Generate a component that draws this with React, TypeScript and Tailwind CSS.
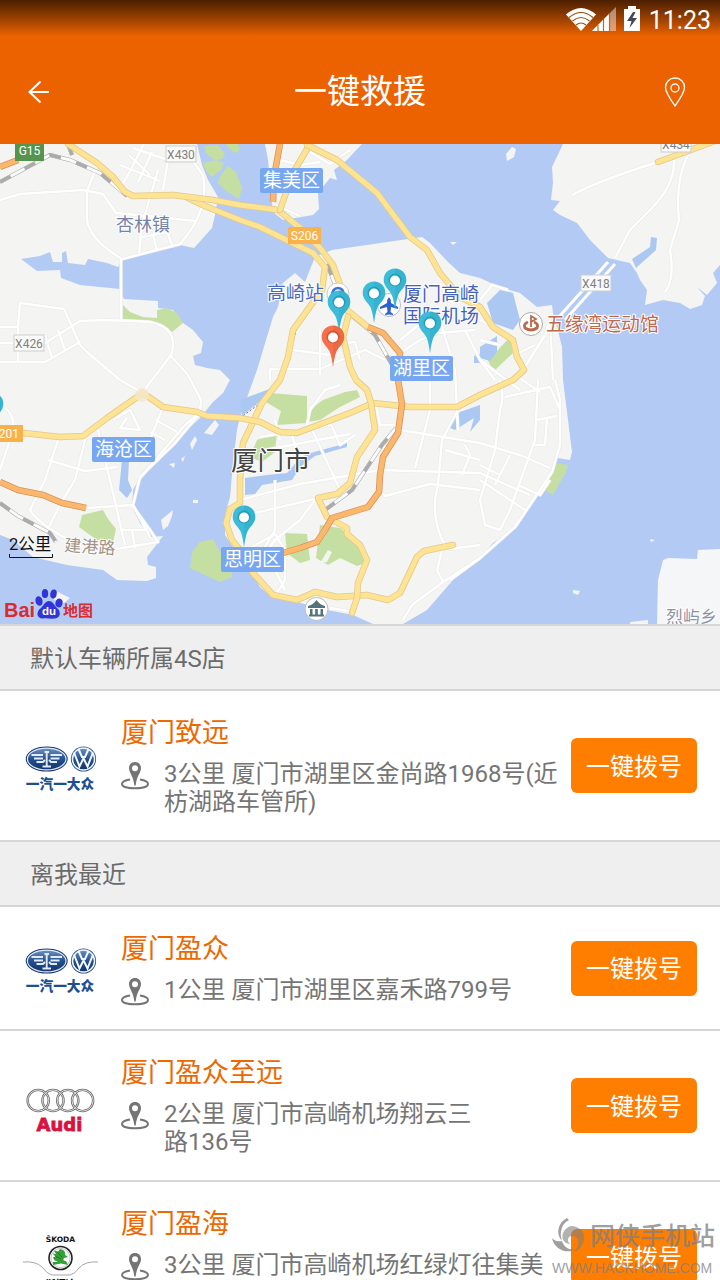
import React from 'react';

const CJK = 'Roboto, "Noto Sans CJK SC", sans-serif';

type RoadProps = { d: string };

function YellowRoad({ d }: RoadProps) {
  return (
    <g fill="none" strokeLinejoin="round" strokeLinecap="round">
      <path d={d} stroke="#e2c88a" strokeWidth="6.5" />
      <path d={d} stroke="#fde392" strokeWidth="5" />
    </g>
  );
}

function OrangeRoad({ d }: RoadProps) {
  return (
    <g fill="none" strokeLinejoin="round">
      <path d={d} stroke="#d9905a" strokeWidth="6.5" />
      <path d={d} stroke="#fbb86d" strokeWidth="5" />
    </g>
  );
}

function Railway({ d }: RoadProps) {
  return (
    <g fill="none">
      <path d={d} stroke="#a5a5a5" strokeWidth="4" />
      <path d={d} stroke="#fbfbfb" strokeWidth="3" />
      <path d={d} stroke="#ababab" strokeWidth="3.5" strokeDasharray="12 16" />
    </g>
  );
}

function MapPin({ x, y, color = '#3cbcd8', edge = '#1f94af' }: { x: number; y: number; color?: string; edge?: string }) {
  return (
    <g transform={`translate(${x} ${y})`}>
      <path
        d="M0 -11.5C-6.6 -11.5 -11.3 -6.5 -11.3 -.3C-11.3 6.5 -6 9.5 -3.6 14C-1.8 18 -1 23 0 30C1 23 1.8 18 3.6 14C6 9.5 11.3 6.5 11.3 -.3C11.3 -6.5 6.6 -11.5 0 -11.5Z"
        fill={color}
      />
      <path d="M0 -11.5C6.6 -11.5 11.3 -6.5 11.3 -.3C11.3 6.5 6 9.5 3.6 14C1.8 18 1 23 0 30Z" fill={edge} opacity=".2" />
      <circle r="6.5" fill={edge} opacity=".75" />
      <circle cy=".5" r="5" fill="#fff" />
    </g>
  );
}

function District({ x, y, w = 63, name }: { x: number; y: number; w?: number; name: string }) {
  return (
    <g>
      <rect x={x} y={y} width={w} height="25" rx="2" fill="#78a7f2" />
      <text x={x + w / 2} y={y + 19} textAnchor="middle" fontSize="19" fill="#fff">{name}</text>
    </g>
  );
}

function RoadSign({ x, y, name }: { x: number; y: number; name: string }) {
  return (
    <g>
      <rect x={x} y={y} width="30" height="16" fill="#fafafa" stroke="#cdcdcd" />
      <text x={x + 15} y={y + 12.5} textAnchor="middle" fontSize="12" fill="#808080">{name}</text>
    </g>
  );
}

const GREENS = [
  'M123 305L130 312L143 317L157 318L157 310L167 308L177 313L183 323L172 332L160 323L123 319Z',
  'M270 393L307 396V423L277 425L281 411L266 402Z',
  'M323 400L345 392L357 390L360 397L340 407L320 420L308 422L311 409Z',
  'M257 440L277 432L275 452L262 462L250 457Z',
  'M320 525L340 528L363 547L366 563L357 566L340 558L328 565L316 558Z',
  'M285 533L307 534L310 560L300 563L287 553Z',
  'M82 515L103 510L108 519L116 529L113 542L97 540L79 527Z',
  'M200 542L213 539L219 550L230 560L232 577L220 582L190 568L192 552Z',
  'M557 463L568 465L566 472L553 495L542 488Z',
  'M510 337L513 353L493 372L488 360L498 350Z',
  'M265 479L278 474L287 478L275 484Z',
];

const WATERS = [
  'M487 303L500 290L513 293L520 320L513 330L493 323Z',
  'M480 347L497 336V352L490 361L480 358Z',
  'M245 478L267 475L287 473L300 458L307 454L347 443V447L315 456L300 467L292 480L262 485L255 494L245 495Z',
  'M448 427L460 412L480 405V420L470 432L474 418L455 430Z',
  'M122 460H129L128 480L132 490L127 498L119 490Z',
  'M632 259L650 247L651 237L657 238L656 250L636 268Z',
  'M474 356L480 354V363H474Z',
  'M240 400L275 387L262 400L242 416Z',
];

const MINOR = [
  'M0 200L20 194L83 190L103 194L116 213L196 221',
  'M144 144L128 175L121 186M133 148L168 160L163 190M120 165L160 181M129 155L150 175M152 152L138 182',
  'M87 212V191L97 166M87 190V220Q90 240 122 259L180 244Q210 210 203 175L192 160',
  'M158 170L142 225L139 253M153 235L157 250M167 232L173 247M139 238L167 232',
  'M121 258V319M0 327H18L20 303L64 309L80 345L88 353L120 380M0 343H45L80 321Q110 319 150 322Q180 328 171 355Q160 370 148 385L143 393',
  'M0 362L45 362L80 342M45 335L52 358M58 330L65 350M170 355L188 375L200 398Q205 410 185 425L140 478',
  'M143 393L120 380M18 327V362',
  'M0 405Q20 415 10 440L0 470M58 440L45 480L30 510Q35 520 60 535L75 543',
  'M86 436L75 480Q50 520 45 538M48 460L85 471L117 467M98 430L110 480L125 545M113 420L130 410L140 430L120 428L127 418M163 407L150 440M156 420L177 432M150 432L165 440M110 550L158 542L150 530L132 505L87 508',
  'M200 413L175 443L140 477L133 505L150 537M120 530L145 530M132 530L135 548',
  'M310 152L330 164L350 150M280 160L300 165L320 162M276 205L300 216M290 180L305 175',
  'M270 380V369L320 369L365 350L385 360M293 350L330 355V335M320 330V375M330 345L355 342L360 360',
  'M400 353L420 340L438 333L475 330M440 320L455 370L458 430M420 324L400 340',
  'M465 330L480 360L520 390M480 340L500 345M515 375L540 392',
  'M240 500L300 484L380 470L480 473L530 495M242 516L310 500L335 495M275 480V530L260 555L275 570L285 590M260 437L330 425M265 450L350 434M290 430L297 450M310 425L340 490M275 420L280 440M330 422L340 445L355 435',
  'M260 560L275 540L300 520L315 500M250 548L275 534L285 550V580L275 596M330 608L354 612',
  'M307 425L310 410L325 390L340 385M395 425L400 430L480 443L520 455L550 468M375 400L380 425L395 425M386 434L381 470',
  'M430 380V410L415 468M458 410L442 440L438 485Q430 510 442 540L450 549L480 545M465 445L470 455L462 475M378 490L385 496L430 484L480 490M445 450L480 460',
  'M443 582L480 558L515 527L552 472L560 445V400L555 380M443 582L437 570L442 550M403 620L412 605L443 582',
  'M500 380Q505 395 500 410L495 450L480 500L485 525L500 530L510 510L535 440L538 380M505 397L550 387L560 410M536 420L557 416M547 418L545 445H535M480 465L500 475M510 455L495 485M480 480L525 510M518 485L540 495L550 480',
  'M480 300L492 285L508 290M480 320L500 330M480 360L495 380M523 370L545 335L550 320L553 380M514 355L535 345',
  'M572 195Q600 180 658 162M674 160Q675 185 650 210L630 230L615 258M688 155Q675 180 679 220L670 250Q675 280 665 292',
  'M480 558L450 580',
];

function CityMap() {
  return (
    <svg
      viewBox="0 144 720 480"
      preserveAspectRatio="xMidYMid slice"
      className="block h-[480px] w-full shrink-0"
      fontFamily={CJK}
      role="img"
      aria-label="厦门市地图"
    >
      <rect y="144" width="720" height="480" fill="#b3cbf4" />
      <g fill="#f4f4f3">
        <path d="M0 144H197L202 165L208 180L218 197L215 215L212 228L194 248L180 245L123 258L118 267L107 263L88 259L85 265L68 263L66 251L62 253V262L53 262L50 252L40 256L21 259L37 271L60 270L61 278L80 285L120 289L124 299L158 301V308L173 310L183 323L193 330L203 342L201 353L193 356L195 365L207 368L220 370L230 380L223 393L213 402L200 418L173 443L140 477L133 490L132 507L140 523L150 537L163 536L147 557L148 565L156 567V578L147 581L117 580L103 570L67 565L33 557L13 540L0 535Z" />
        <path d="M265 144L268 160L272 203L273 212L283 220L313 215L319 209L318 193L330 178L337 180L334 170L347 160L362 144Z" />
        <path d="M332 250L422 237L430 243L448 262L460 273L480 278L500 287L520 293L537 307L552 305L553 313L557 327L562 347L563 380L572 452L570 460L557 458L552 480L542 490L517 527L493 543L480 558L453 580L427 610L403 624H373L353 615L327 610L297 602L273 598L260 587L252 572L235 550L225 535V515L230 497L233 463L237 430L240 417L257 370L273 317L278 307L283 283L295 273L305 282L315 257Z" />
        <path d="M563 144L552 167L553 183L551 200L560 201L553 210L560 215L577 223L590 240L608 258L630 263L637 273L640 280L647 290L645 305L663 300L680 303L690 309L702 305L705 296L697 287L707 295L717 283L713 273L720 265V144Z" />
        <path d="M657 624L658 580L663 560L668 558L697 559L698 550L720 549V624Z" fill="#f4f6f8" />
        <path d="M204 433L215 420L219 425L212 435ZM190 444L195 436L197 440L192 450ZM169 464L175 463L174 468ZM181 459L185 456L183 462ZM161 520L173 510L172 516L168 526L163 530ZM506 154L512 147L516 149L514 157L507 161ZM573 590L580 591L578 595L573 593ZM650 539L655 540L651 542ZM630 622L648 620V624H630ZM450 242L457 242L453 245ZM193 500H198V503H193ZM54 590L70 598L64 603L54 600Z" />
      </g>
      <g fill="#c5dfa2">{GREENS.map((d) => <path key={d} d={d} />)}</g>
      <g fill="#abc8f2">{WATERS.map((d) => <path key={d} d={d} />)}</g>
      <g fill="#c5dfa2">
        <path d="M204 146L218 145L225 154L222 159L214 160L206 153ZM203 163L216 160L224 163L221 170L212 177L206 171ZM228 166L236 172L242 188L239 199L226 191L218 183L220 176ZM226 144H238L240 150L235 153L229 149Z" />
      </g>
      <path d="M320 563L328 550L332 552L327 562Z" fill="#f4f4f3" />

      <g fill="none" strokeLinejoin="round">
        {MINOR.map((d) => <path key={d} d={d} stroke="#e9e9e8" strokeWidth="3.5" />)}
        {MINOR.map((d) => <path key={d} d={d} stroke="#fff" strokeWidth="2.4" />)}
        <path d="M608 262L558 318M615 264L565 320" stroke="#fff" strokeWidth="3" />
      </g>

      <Railway d="M0 182L50 155L70 160L100 173L127 196M68 144L72 155" />
      <Railway d="M327 264L345 310L375 335L395 370" />
      <Railway d="M325 510L352 490L382 445L396 428" />
      <Railway d="M0 503L18 516L50 533L56 542" />
      <path d="M318 300L297 328L282 380L262 402L240 418" fill="none" stroke="#777" strokeDasharray="2 2" />

      <YellowRoad d="M188 198L205 206L240 220L260 227L313 253L325 267L322 290L293 330L288 357L280 380L262 403L243 443L240 480L240 503L230 509L226 523L232 540L240 550L253 573L273 595L297 600L315 592L337 597L367 595L388 600L400 593L417 557L424 551L453 545" />
      <YellowRoad d="M68 144L97 163L113 177L125 192L133 196L173 195L213 200L240 205L278 210L300 228L320 248L333 265L342 290L347 310L368 327" />
      <YellowRoad d="M310 144L293 173L280 210" />
      <YellowRoad d="M307 145L337 160L377 193L410 237L427 250L440 273L460 297L480 307L493 327L513 340L517 357L524 370L513 380L480 395L457 407H410L373 403L350 413L297 433L280 432L260 422L240 418L207 416L197 412L163 407L143 393L107 418L83 436L60 437L23 433" />
      <YellowRoad d="M348 317L343 337L350 367L356 380L367 390L371 403L375 430L357 457L350 483L337 494L318 498L327 517L347 528V534L360 545L367 560L358 583L357 598L352 613" />
      <YellowRoad d="M658 162L715 141" />
      <circle cx="142" cy="395" r="7" fill="#f4e9c9" opacity=".8" />
      <OrangeRoad d="M280 144L274 177L273 202" />
      <OrangeRoad d="M368 327L383 333L400 353L398 380L402 404L398 433L383 457L380 475L379 492L368 507L332 518L325 530L317 542L300 548L283 553" />
      <OrangeRoad d="M0 482L18 490L43 495L62 503L86 508" />
      <OrangeRoad d="M0 167L18 160" />

      <RoadSign x={166} y={146} name="X430" />
      <RoadSign x={14} y={335} name="X426" />
      <RoadSign x={581} y={275} name="X418" />
      <RoadSign x={661} y={136} name="X434" />
      <rect x="15" y="140" width="29" height="21" fill="#55944d" />
      <text x="29.5" y="155" textAnchor="middle" fontSize="12" fill="#fff">G15</text>
      <rect x="288" y="227" width="33" height="17" fill="#f9b14b" />
      <text x="304.500" y="239.500" textAnchor="middle" fontSize="12" fill="#fff">S206</text>
      <rect x="-6" y="425" width="29" height="17" fill="#f9b14b" />
      <text x="19" y="438" textAnchor="end" fontSize="12" fill="#fff">201</text>

      <circle cx="338" cy="294" r="11" fill="#fff" stroke="#c9ccd2" />
      <path d="M332 297Q332 288 338 288Q344 288 344 297" fill="none" stroke="#3f6fd8" strokeWidth="2.500" />
      <circle cx="389" cy="305" r="11.500" fill="#fff" stroke="#b8bbc2" />
      <path d="M389 297Q391 299 391 303L398 307V309L391 307L390.500 312L393 314V315L389 314.500L385 315V314L387.500 312L387 307L380 309V307L387 303Q387 299 389 297Z" fill="#2b61d1" />
      <circle cx="531" cy="324" r="11.500" fill="#fff" stroke="#aaa" />
      <g fill="none" stroke="#b8694c" strokeWidth="2.800">
        <path d="M528 322Q523 324 525 328Q531 332 537 328Q539 324 534 322" />
        <path d="M531 327V316L536 319L531 322" strokeWidth="1.800" />
      </g>
      <circle cx="316.500" cy="609" r="11.500" fill="#fff" stroke="#bbb" />
      <path d="M308 606Q313 605 316.500 600Q320 605 325 606V608H308ZM310 609H312.500V615H310ZM315.200 609H317.800V615H315.200ZM320.500 609H323V615H320.500ZM309 614.500H324V616.500H309Z" fill="#54737c" />

      <g fontSize="18" stroke="#fff" strokeWidth="2" paintOrder="stroke" strokeLinejoin="round">
        <text x="116" y="231" fill="#7583a8">杏林镇</text>
        <text x="267" y="300" fontSize="19" fill="#4a69c0">高崎站</text>
        <text x="403" y="301" fontSize="19" fill="#4361bd">厦门高崎</text>
        <text x="403" y="323" fontSize="19" fill="#4361bd">国际机场</text>
        <text x="546" y="331" fontSize="18.800" fill="#c0684c">五缘湾运动馆</text>
        <text x="666" y="623" fontSize="17" fill="#8b92a8">烈屿乡</text>
        <text x="64" y="551" fontSize="17" fill="#a0938a" transform="rotate(4 64 551)">建港路</text>
        <text x="231" y="470" fontSize="26.500" fill="#444">厦门市</text>
      </g>
      <District x={260} y={168} name="集美区" />
      <District x={92} y={437} name="海沧区" />
      <District x={390} y={356} name="湖里区" />
      <District x={221} y={547} name="思明区" />

      <MapPin x={374} y={293} />
      <MapPin x={395} y={280} />
      <MapPin x={339} y={302} />
      <MapPin x={430} y={323} />
      <MapPin x={244} y={517} />
      <MapPin x={-8} y={404} />
      <MapPin x={333} y={337} color="#f4714b" edge="#c9502e" />

      <text x="9" y="550" fontSize="16.500" fill="#111">2公里</text>
      <path d="M9.500 554V557.500H52.500V554" fill="none" stroke="#111" />

      <g fontWeight="700">
        <text x="4" y="617" fontSize="20" fontFamily='"Liberation Sans", sans-serif' fill="#dc2b30">Bai</text>
        <g fill="#3234d8">
          <ellipse cx="39" cy="601" rx="3.500" ry="4.800" transform="rotate(-15 39 601)" />
          <ellipse cx="45" cy="593.500" rx="3.200" ry="4.500" />
          <ellipse cx="53.500" cy="594" rx="3.200" ry="4.500" transform="rotate(12 53.500 594)" />
          <ellipse cx="59" cy="603" rx="3.500" ry="4.500" transform="rotate(15 59 603)" />
          <path d="M49 601C53 601 54 605 57 608C61 611 61 618 55 618.500C51 619 47 618 43 618.500C36 618.500 36 611 41 608C44 605 45 601 49 601Z" />
        </g>
        <text x="49" y="615" textAnchor="middle" fontSize="11.500" fontFamily='"Liberation Sans", sans-serif' fill="#fff">du</text>
        <text x="63" y="616" fontSize="15" fill="#dc2b30">地图</text>
      </g>
    </svg>
  );
}

function FawVwLogo() {
  return (
    <svg viewBox="0 0 74 72" className="h-[72px] w-[74px] shrink-0" role="img" aria-label="一汽大众">
      <defs>
        <linearGradient id="badgeBlue" x1="0" y1="0" x2="0" y2="1">
          <stop offset="0" stopColor="#6d92c4" />
          <stop offset=".5" stopColor="#24508f" />
          <stop offset="1" stopColor="#12346d" />
        </linearGradient>
      </defs>
      <ellipse cx="22.700" cy="29" rx="21" ry="12.600" fill="#173a73" />
      <ellipse cx="22.700" cy="29" rx="19.300" ry="10.900" fill="url(#badgeBlue)" stroke="#dfe9f5" strokeWidth="1.200" />
      <g fill="none" stroke="#e3ecf5" strokeWidth="1.900">
        <path d="M7.500 25H19M10 28.500H19M12.500 32H19L21 30M38 25H26.500M35.500 28.500H26.500M33 32H27L25 30" />
        <path d="M20.500 22H25M22.700 21V37M18.500 36.500H27" />
      </g>
      <circle cx="59.500" cy="29" r="12.600" fill="#24508f" />
      <circle cx="59.500" cy="29" r="11" fill="url(#badgeBlue)" stroke="#eef4fa" strokeWidth="1.500" />
      <path d="M54.500 19L58 27H61L64.500 19M50 22.500L55.500 36.500L59.500 28.300L63.500 36.500L69 22.500" fill="none" stroke="#f4f8fc" strokeWidth="2" />
      <text x="36" y="59" textAnchor="middle" fontSize="13.700" fontWeight="900" fontFamily={CJK} fill="#1b4f90">一汽一大众</text>
    </svg>
  );
}

function AudiLogo() {
  return (
    <svg viewBox="0 0 74 72" className="h-[72px] w-[74px] shrink-0" role="img" aria-label="Audi">
      <g fill="none">
        {[14.2, 29, 43.8, 58.600].map((cx) => <circle key={cx} cx={cx} cy="30.500" r="10.600" stroke="#6a6a6a" strokeWidth="2.400" />)}
        {[14.2, 29, 43.8, 58.600].map((cx) => <circle key={cx} cx={cx} cy="30.500" r="10.600" stroke="#dedede" strokeWidth="1" />)}
      </g>
      <text x="35.500" y="60.500" textAnchor="middle" fontSize="18" fontWeight="700" fontFamily='"DejaVu Sans", sans-serif' fill="#d8123f" stroke="#d8123f" strokeWidth=".8">Audi</text>
    </svg>
  );
}

function SkodaLogo() {
  return (
    <svg viewBox="0 0 74 72" className="h-[72px] w-[74px] shrink-0 overflow-visible" role="img" aria-label="ŠKODA">
      <text x="36.500" y="20.500" textAnchor="middle" fontSize="7.500" fontWeight="700" fontFamily='"DejaVu Sans", sans-serif' fill="#111">ŠKODA</text>
      <path d="M-1 41Q12 40 18 46Q23 53 28 54H46Q51 53 55 47Q61 40 74 41" fill="none" stroke="#8f8f8f" strokeWidth=".8" />
      <circle cx="36.500" cy="37" r="11.500" fill="#fff" stroke="#222" strokeWidth="1.600" />
      <circle cx="36.500" cy="37" r="9.600" fill="none" stroke="#b5b5b5" strokeWidth=".8" />
      <path d="M29 44V41H34L30 39L29 36H32L28.500 32.500L32 33L30 29.500L34 30.500L36 28Q42 29 41 34L44 36L40 37Q38 40 42 40L44 44L37 42.500Z" fill="#35a035" />
      <path d="M33 31L38 36M31 35L37 38" stroke="#176b25" strokeWidth=".8" />
      <text x="36.500" y="66.500" textAnchor="middle" fontSize="10" fontWeight="900" fontFamily={CJK} fill="#111">斯柯达</text>
    </svg>
  );
}

function AddressIcon() {
  return (
    <svg viewBox="0 0 28 28" className="mt-[2px] -mb-[2px] h-7 w-7 shrink-0" aria-hidden="true">
      <path d="M9 17.500C4 18.300 1 20 1 22C1 24.700 7 26.300 14 26.300S27 24.700 27 22C27 20 24 18.300 19 17.500" fill="none" stroke="#757575" strokeWidth="1.900" />
      <path fillRule="evenodd" d="M14 0C10.300 0 8 2.700 8 6C8 11 12.500 14 13.300 23.500H14.700C15.500 14 20 11 20 6C20 2.700 17.700 0 14 0ZM14 3.200A3 3 0 1 1 14 9.200A3 3 0 0 1 14 3.200Z" fill="#757575" />
    </svg>
  );
}

type Shop = { name: string; lines: string[]; Logo: () => React.JSX.Element };

function ShopRow({ name, lines, Logo }: Shop) {
  return (
    <article className="flex min-h-[124px] shrink-0 items-center border-b-2 border-[#d6d6d6] bg-white pr-[23px] pl-6">
      <Logo />
      <div className="ml-[23px] min-w-0 flex-1 self-start py-6">
        <h3 className="text-[27px] leading-9 text-[#ec6800]">{name}</h3>
        <div className="mt-[9px] flex gap-[15px]">
          <AddressIcon />
          <p className="text-[24px] leading-7 whitespace-nowrap text-[#757575]">
            {lines.map((line, i) => <span key={i} className="block min-h-7">{line}</span>)}
          </p>
        </div>
      </div>
      <button type="button" className="h-[55px] w-[126px] shrink-0 rounded-md bg-[#ff7e00] pt-[2px] text-[24px] text-white">
        一键拨号
      </button>
    </article>
  );
}

function SectionTitle({ children }: { children: string }) {
  return (
    <h2 className="h-[65px] shrink-0 border-b-2 border-[#d6d6d6] bg-[#efefef] px-[30px] text-[24px] leading-[66px] text-[#6b6b6b]">
      {children}
    </h2>
  );
}

const NEARBY: Shop[] = [
  { name: '厦门盈众', lines: ['1公里 厦门市湖里区嘉禾路799号'], Logo: FawVwLogo },
  { name: '厦门盈众至远', lines: ['2公里 厦门市高崎机场翔云三', '路136号'], Logo: AudiLogo },
  { name: '厦门盈海', lines: ['3公里 厦门市高崎机场红绿灯往集美', ''], Logo: SkodaLogo },
];

function StatusBar() {
  return (
    <div className="flex h-12 items-start justify-end bg-linear-to-b from-[#4c2000] to-[#ec6200] to-75% pt-1 pr-[9px] text-white">
      <svg viewBox="0 0 78 28" className="mt-[2px] h-7 w-[78px]" aria-hidden="true">
        <path d="M0 8.500Q15 -4.500 30 8.500L15 25Z" fill="#fff" />
        <path d="M3 11.500Q15 1.500 27 11.500M6.500 15Q15 8 23.500 15M10 19Q15 15 20 19" fill="none" stroke="#9a4b13" strokeWidth="1.200" />
        <path d="M26 25L50 1V25Z" fill="#fff" opacity=".45" />
        <path d="M26 25L44 7V25Z" fill="#fff" />
        <path d="M32 19V25M37.500 13V25M43.500 7V25" stroke="#c7651c" strokeWidth="1.200" />
        <path d="M58 3H62V0H70V3H74V25H58Z" fill="#fff" />
        <path d="M67 6L61 15H65.500L63.500 22L71 12H66.500L69.500 6Z" fill="#434a55" />
      </svg>
      <time className="ml-[5px] text-[25px] leading-[34px]">11:23</time>
    </div>
  );
}

function Watermark() {
  return (
    <div className="pointer-events-none absolute right-1 bottom-0 flex w-[164px] flex-col text-[#808080] opacity-75">
      <div className="flex items-center gap-1">
        <svg viewBox="0 0 34 38" className="h-[38px] w-[34px]" aria-hidden="true">
          <path d="M15 0C5 5 4 17 10 23C4 24 2 22 0 20C2 31 15 37 24 31C15 33 10 27 9 19C8 11 11 5 17 2Z" fill="currentColor" />
          <path d="M19 8C29 8 36 17 30 27C28 31 25 33 22 34C30 25 26 17 19 18C15 19 15 25 19 26C12 26 9 21 11 15C13 11 15 9 19 8Z" fill="currentColor" opacity=".8" />
        </svg>
        <span className="text-[25px] leading-8 font-medium whitespace-nowrap">网侠手机站</span>
      </div>
      <span className="font-['Liberation_Sans',sans-serif] text-[14px] leading-6 whitespace-nowrap">WWW.HACKHOME.COM</span>
    </div>
  );
}

export default function App() {
  return (
    <div className="relative flex h-screen flex-col overflow-hidden bg-white font-[Roboto,'Noto_Sans_CJK_SC',sans-serif]">
      <header className="shrink-0 bg-[#ec6200] text-white">
        <StatusBar />
        <div className="grid h-24 grid-cols-[1fr_auto_1fr] items-center px-7 pb-2">
          <button type="button" aria-label="返回" className="w-[22px]">
            <svg viewBox="0 0 22 24" className="h-6 w-[22px]" fill="none" stroke="currentColor" strokeWidth="2">
              <path d="M12.500 1.500L1.500 12L12.500 22.500M1.500 12H21" />
            </svg>
          </button>
          <h1 className="text-[33px] leading-10">一键救援</h1>
          <button type="button" aria-label="定位" className="mr-[6px] w-[22px] justify-self-end">
            <svg viewBox="0 0 22 30" className="h-[30px] w-[22px]" fill="none" stroke="currentColor" strokeWidth="1.300">
              <path d="M11 1C5.500 1 1.500 5 1.500 10.500C1.500 15.500 6.500 22.500 11 29C15.500 22.500 20.500 15.500 20.500 10.500C20.500 5 16.500 1 11 1Z" />
              <circle cx="11" cy="11" r="4" />
            </svg>
          </button>
        </div>
      </header>
      <main className="flex min-h-0 flex-1 flex-col overflow-y-auto [scrollbar-width:none]">
        <CityMap />
        <section className="flex shrink-0 flex-col border-t-2 border-[#d6d6d6]">
          <SectionTitle>默认车辆所属4S店</SectionTitle>
          <ShopRow name="厦门致远" lines={['3公里 厦门市湖里区金尚路1968号(近', '枋湖路车管所)']} Logo={FawVwLogo} />
        </section>
        <section className="flex shrink-0 flex-col">
          <SectionTitle>离我最近</SectionTitle>
          {NEARBY.map((shop) => <ShopRow key={shop.name} {...shop} />)}
        </section>
      </main>
      <Watermark />
    </div>
  );
}
